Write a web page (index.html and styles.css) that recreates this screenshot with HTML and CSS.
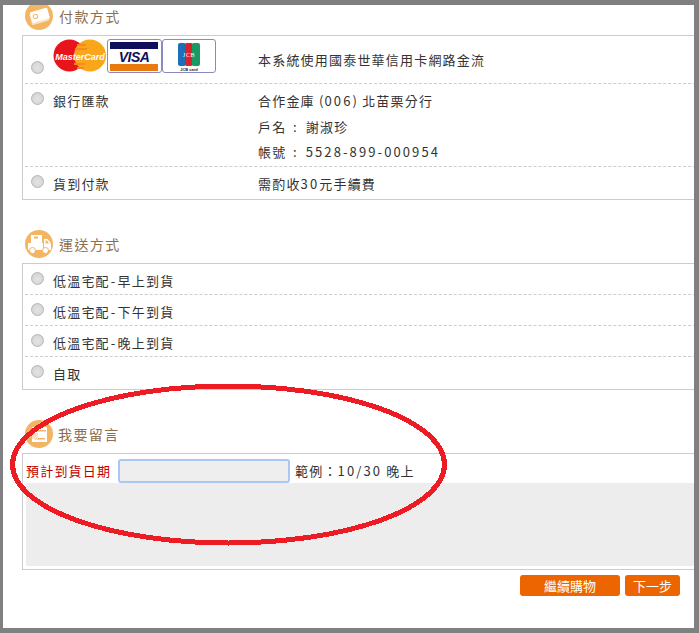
FILE: index.html
```html
<!DOCTYPE html>
<html lang="zh-Hant">
<head>
<meta charset="utf-8">
<title>付款方式</title>
<link rel="stylesheet" href="styles.css">
</head>
<body>
<main class="panel">
  <div class="inner">
    <h2 class="head">
      <svg class="head-icon" viewBox="0 0 28 28"><circle cx="14" cy="14" r="14" fill="#f2b563"/><g transform="rotate(-16 14 14)"><rect x="5" y="10" width="18" height="11" rx="1" fill="#fbe3c0"/><rect x="6" y="8" width="18" height="11" rx="1" fill="#fff"/><circle cx="10.500" cy="13.500" r="2.200" fill="none" stroke="#f2b563"/></g></svg>
      <span>付款方式</span>
    </h2>
    <section class="box">
      <div class="row row-card">
        <span class="radio radio-low"></span>
        <div class="logos">
          <svg class="mc" viewBox="0 0 54 34"><circle cx="16.500" cy="16.500" r="16" fill="#e8141c"/><circle cx="37" cy="16.500" r="16" fill="#f9a61a"/><path d="M24 5h9v2h-9zM22 9h12v2H22zM21 24h11v2H21zM24 28h7v2h-7z" fill="#f58a1f"/><text x="27" y="20.500" text-anchor="middle" class="mc-text">MasterCard</text></svg>
          <div class="card"><svg viewBox="0 0 52 32"><rect x="2" y="2" width="48" height="7" fill="#10105a"/><rect x="2" y="24" width="48" height="7" fill="#e87a10"/><text x="26" y="22" text-anchor="middle" class="visa-text">VISA</text></svg></div>
          <div class="card"><svg viewBox="0 0 52 32"><rect x="15" y="3" width="8" height="23" rx="2" fill="#1d6fb8"/><rect x="22" y="3" width="8" height="23" rx="2" fill="#d8232a"/><rect x="29" y="3" width="8" height="23" rx="2" fill="#179a63"/><text x="26" y="17" text-anchor="middle" class="jcb-text">JCB</text><text x="26" y="31" text-anchor="middle" class="jcb-sub">JCB card</text></svg></div>
        </div>
        <div class="info">本系統使用國泰世華信用卡網路金流</div>
      </div>
      <div class="row row-bank">
        <span class="radio"></span>
        <div class="label">銀行匯款</div>
        <div class="info">
          <p class="line">合作金庫 (<span class="num">006</span>) 北苗栗分行</p>
          <p class="line">戶名<span class="sep">:</span>謝淑珍</p>
          <p class="line">帳號<span class="sep">:</span><span class="num">5528-899-000954</span></p>
        </div>
      </div>
      <div class="row row-cod">
        <span class="radio"></span>
        <div class="label">貨到付款</div>
        <div class="info">需酌收<span class="num">30</span>元手續費</div>
      </div>
    </section>

    <h2 class="head">
      <svg class="head-icon" viewBox="0 0 28 28"><circle cx="14" cy="14" r="14" fill="#f2b563"/><rect x="6" y="5" width="11" height="8" fill="#fff"/><rect x="9" y="6.500" width="4" height="2" fill="#f2b563"/><rect x="3" y="13" width="15" height="7" fill="#fff"/><path d="M19 9h3.500l3.500 4.500V20h-7z" fill="#fff"/><path d="M20.500 10.500h1.500l2 3h-3.500z" fill="#f2b563"/><circle cx="7.500" cy="20.500" r="3" fill="#fff" stroke="#f2b563"/><circle cx="20.500" cy="20.500" r="3" fill="#fff" stroke="#f2b563"/></svg>
      <span>運送方式</span>
    </h2>
    <section class="box">
      <div class="row row-ship"><span class="radio"></span><div class="label">低溫宅配<span class="dash">-</span>早上到貨</div></div>
      <div class="row row-ship"><span class="radio"></span><div class="label">低溫宅配<span class="dash">-</span>下午到貨</div></div>
      <div class="row row-ship"><span class="radio"></span><div class="label">低溫宅配<span class="dash">-</span>晚上到貨</div></div>
      <div class="row row-ship row-last"><span class="radio"></span><div class="label">自取</div></div>
    </section>

    <h2 class="head head-note">
      <svg class="head-icon" viewBox="0 0 28 28"><circle cx="14" cy="14" r="14" fill="#f2b563"/><rect x="7" y="7" width="15" height="15" fill="#fff"/><rect x="10" y="10" width="11" height="1.500" fill="#f2b563"/><rect x="10" y="18" width="10" height="1.500" fill="#f2b563"/><rect x="7" y="13" width="6" height="6" fill="#fbe3c0"/></svg>
      <span>我要留言</span>
    </h2>
    <section class="box box-note">
      <div class="date-row">
        <label class="date-label" for="date">預計到貨日期</label>
        <input class="date-input" id="date" type="text">
        <span class="hint">範例：<span class="num">10/30</span> 晚上</span>
      </div>
      <textarea class="note" aria-label="我要留言"></textarea>
    </section>
    <div class="actions">
      <button class="btn btn-wide" type="button">繼續購物</button>
      <button class="btn btn-next" type="button">下一步</button>
    </div>
  </div>
</main>
<svg class="circle-mark" viewBox="0 0 699 633" aria-hidden="true"><ellipse cx="228.500" cy="464.500" rx="216" ry="78.500" fill="none" stroke="#ed1c24" stroke-width="5" shape-rendering="crispEdges"/></svg>
</body>
</html>
```

FILE: styles.css
```css
html, body {
  margin: 0;
  padding: 0;
}
body {
  position: relative;
  width: 699px;
  height: 633px;
  overflow: hidden;
  background: #808080;
  font-family: "Noto Sans CJK TC", "Liberation Sans", sans-serif;
  font-size: 13px;
  color: #333;
  letter-spacing: 1.2px;
}
.panel {
  margin-left: 3px;
  width: 691px;
  height: 623px;
  position: absolute;
  top: 5px;
  left: 0;
  background: #fff;
  overflow: hidden;
}
.inner {
  margin-top: -3px;
  padding-left: 19px;
}
.head {
  display: flex;
  align-items: center;
  gap: 6px;
  margin: 0 0 5px;
  height: 28px;
  font-size: 14px;
  font-weight: 400;
  letter-spacing: 1.4px;
  color: #8c6f4e;
}
.head-note {
  gap: 5px;
}
.head-icon {
  width: 28px;
  height: 28px;
  margin-left: 3px;
  flex: none;
}
.box {
  width: 700px;
  border: 1px solid #ccc;
  margin-bottom: 30px;
  box-sizing: border-box;
}
.row {
  display: flex;
  align-items: flex-start;
  margin-left: 2px;
  border-bottom: 1px dashed #ccc;
  box-sizing: border-box;
  position: relative;
}
.radio {
  flex: none;
  width: 13px;
  height: 13px;
  margin: 0 9px 0 6px;
  border-radius: 50%;
  box-sizing: border-box;
  border: 1px solid #b5b5b5;
  background: radial-gradient(circle at 50% 55%, #e4e4e4 0, #d8d8d8 60%, #c8c8c8 100%);
}
.radio-low {
  margin-top: 25px;
}
.label {
  line-height: 20px;
  margin-top: -1px;
}
.info {
  line-height: 20px;
}
.line {
  margin: 0;
  line-height: 25.500px;
}
.num {
  letter-spacing: 2.100px;
}
.sep {
  margin: 0 8px 0 6.500px;
}
.dash {
  margin: 0 1px;
}
.hint {
  position: relative;
  top: -1px;
}
.row-card {
  height: 48px;
}
.logos {
  display: flex;
  align-items: flex-start;
  width: 205px;
  padding-top: 3px;
  flex: none;
}
.row-card .info {
  padding-top: 14px;
}
.mc {
  width: 54px;
  height: 34px;
  flex: none;
}
.mc-text {
  font-family: "Liberation Sans", sans-serif;
  font-size: 9px;
  font-weight: 700;
  font-style: italic;
  letter-spacing: 0;
  fill: #fff;
}
.card {
  width: 54.500px;
  height: 34px;
  border: 1px solid #8a8ac0;
  border-radius: 3px;
  box-sizing: border-box;
  background: #fff;
  flex: none;
}
.card svg {
  display: block;
  width: 52px;
  height: 32px;
}
.visa-text {
  font-family: "Liberation Sans", sans-serif;
  font-size: 14px;
  font-weight: 700;
  font-style: italic;
  letter-spacing: -0.500px;
  fill: #10105a;
}
.jcb-text {
  font-family: "Liberation Serif", serif;
  font-size: 6px;
  letter-spacing: 0.500px;
  fill: #fff;
}
.jcb-sub {
  font-family: "Liberation Sans", sans-serif;
  font-size: 4px;
  font-weight: 700;
  letter-spacing: 0;
  fill: #222;
}
.row-bank {
  height: 83px;
  padding-top: 8px;
}
.row-bank .label {
  width: 205px;
  flex: none;
}
.row-bank .info {
  margin-top: -4px;
}
.row-cod {
  height: 32px;
  padding-top: 8px;
  border-bottom: 0;
}
.row-cod .label {
  width: 205px;
  flex: none;
}
.row-cod .info {
  margin-top: -1px;
}
.row-ship {
  height: 31px;
  padding-top: 8px;
}
.row-last {
  height: 32px;
  border-bottom: 0;
}
.box-note {
  height: 117px;
  margin-bottom: 0;
  padding: 5px 0 0 3px;
}
.date-row {
  display: flex;
  align-items: center;
  height: 24px;
}
.date-label {
  color: #c00000;
  width: 92px;
  flex: none;
  position: relative;
  top: -1px;
}
.date-input {
  width: 172px;
  height: 24px;
  box-sizing: border-box;
  margin: 0 5px 0 0;
  padding: 0;
  border: 2px solid #a9c6f5;
  border-radius: 3px;
  background: #eee;
  outline: none;
}
.note {
  display: block;
  width: 680px;
  height: 83px;
  box-sizing: border-box;
  margin: 0;
  padding: 0;
  border: 0;
  background: #ededed;
  resize: none;
  outline: none;
}
.actions {
  display: flex;
  justify-content: flex-start;
  gap: 5px;
  margin: 5px 0 0 498px;
}
.btn {
  height: 21px;
  padding: 0;
  border: 0;
  border-radius: 3px;
  background: #ec6500;
  color: #fff;
  font-family: inherit;
  font-size: 13px;
  letter-spacing: 0;
  line-height: 21px;
}
.btn-wide {
  width: 100px;
}
.btn-next {
  width: 55px;
}
.circle-mark {
  position: absolute;
  left: 0;
  top: 0;
  width: 699px;
  height: 633px;
  pointer-events: none;
}
```
